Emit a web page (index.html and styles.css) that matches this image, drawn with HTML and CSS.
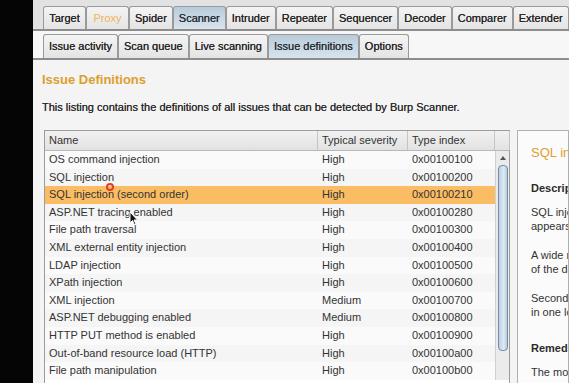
FILE: index.html
```html
<!DOCTYPE html>
<html>
<head>
<meta charset="UTF-8">
<title>Burp Scanner - Issue definitions</title>
<link rel="stylesheet" href="styles.css">
</head>
<body>
	<div class="edge"></div>
	<div class="app">
		<div class="tabs main-tabs">
			<span class="tab">Target</span>
			<span class="tab proxy">Proxy</span>
			<span class="tab">Spider</span>
			<span class="tab active">Scanner</span>
			<span class="tab">Intruder</span>
			<span class="tab">Repeater</span>
			<span class="tab">Sequencer</span>
			<span class="tab">Decoder</span>
			<span class="tab">Comparer</span>
			<span class="tab">Extender</span>
		</div>
		<div class="tabs sub-tabs">
			<span class="tab">Issue activity</span>
			<span class="tab">Scan queue</span>
			<span class="tab">Live scanning</span>
			<span class="tab active">Issue definitions</span>
			<span class="tab">Options</span>
		</div>
		<div class="content">
			<h1 class="title">Issue Definitions</h1>
			<p class="intro">This listing contains the definitions of all issues that can be detected by Burp Scanner.</p>
			<div class="split">
				<div class="list">
					<div class="head">
						<span>Name</span>
						<span>Typical severity</span>
						<span>Type index</span>
						<span></span>
					</div>
					<div class="body">
						<div class="rows">
							<div class="row"><span>OS command injection</span><span>High</span><span>0x00100100</span></div>
							<div class="row"><span>SQL injection</span><span>High</span><span>0x00100200</span></div>
							<div class="row selected"><span>SQL injection (second order)</span><span>High</span><span>0x00100210</span></div>
							<div class="row"><span>ASP.NET tracing enabled</span><span>High</span><span>0x00100280</span></div>
							<div class="row"><span>File path traversal</span><span>High</span><span>0x00100300</span></div>
							<div class="row"><span>XML external entity injection</span><span>High</span><span>0x00100400</span></div>
							<div class="row"><span>LDAP injection</span><span>High</span><span>0x00100500</span></div>
							<div class="row"><span>XPath injection</span><span>High</span><span>0x00100600</span></div>
							<div class="row"><span>XML injection</span><span>Medium</span><span>0x00100700</span></div>
							<div class="row"><span>ASP.NET debugging enabled</span><span>Medium</span><span>0x00100800</span></div>
							<div class="row"><span>HTTP PUT method is enabled</span><span>High</span><span>0x00100900</span></div>
							<div class="row"><span>Out-of-band resource load (HTTP)</span><span>High</span><span>0x00100a00</span></div>
							<div class="row"><span>File path manipulation</span><span>High</span><span>0x00100b00</span></div>
						</div>
						<div class="scrollbar">
							<div class="arrow"></div>
							<div class="thumb"></div>
						</div>
					</div>
					<span class="click"></span>
					<svg class="pointer" width="10" height="15" viewBox="0 0 10 15">
						<path d="M1 1 L1 12 L3.5 9.5 L5.5 14 L7 13.3 L5 9 L8.5 9 Z" fill="#111" stroke="#fff" stroke-width="1"/>
					</svg>
				</div>
				<div class="detail">
					<h2 class="detail-title">SQL injection (second order)</h2>
					<h3>Description</h3>
					<p>SQL injection vulnerabilities arise when user-controllable data<br>appears in database queries in an unsafe manner.</p>
					<p>A wide range of damaging attacks can often be delivered<br>of the database and the application itself.</p>
					<p>Second-order SQL injection arises when user data is stored<br>in one location and later used in a query.</p>
					<h3 class="remed">Remediation</h3>
					<p>The most effective way to prevent SQL injection attacks</p>
				</div>
			</div>
		</div>
	</div>
</body>
</html>
```

FILE: styles.css
```css
*{ box-sizing: border-box; }
body{
	margin: 0;
	height: 383px;
	overflow: hidden;
	display: flex;
	background: #050505;
	font: 11px/14px "Liberation Sans", Arial, sans-serif;
	color: #333;
}
.edge{
	width: 33px;
	flex: none;
	background: #050505;
}
.app{
	flex: 1;
	min-width: 0;
	background: #f4f4f4;
	overflow: hidden;
}

/* tab strips */
.tabs{
	display: flex;
	white-space: nowrap;
	padding-left: 10px;
	border-bottom: 2px solid #8d8d8d;
}
.main-tabs{
	padding-top: 6px;
	background: #e2e2e2;
}
.sub-tabs{
	padding-top: 3px;
	background: #f7f7f7;
}
.tab{
	flex: none;
	min-width: 43px;
	height: 23px;
	padding: 0 5px;
	line-height: 22px;
	text-align: center;
	border: 1px solid #9a9a9a;
	border-bottom: 0;
	border-radius: 3px 3px 0 0;
	background: linear-gradient(#f4f4f4, #e4e4e4);
	color: #262626;
	text-shadow: 0 0 .5px #333;
	font-size: 11px;
}
.sub-tabs .tab{
	height: 24px;
	line-height: 23px;
}
.tab.active{
	background: linear-gradient(#b9cbd9, #d8e4ee);
	color: #24303a;
}
.tab.proxy{ color: #efb55a; text-shadow: none; }

/* page body */
.content{
	padding: 12px 0 0 9px;
}
.title{
	margin: 0;
	font-size: 13px;
	line-height: 16px;
	color: #dba02e;
}
.intro{
	margin: 12px 0 16px;
	color: #2b2b2b;
	text-shadow: 0 0 .4px #444;
}
.split{
	display: flex;
	gap: 7px;
	margin-left: 2px;
}

/* issue list */
.list{
	position: relative;
	flex: none;
	width: 466px;
	border: 1px solid #9c9c9c;
	border-bottom: 0;
	background: #fff;
}
.head, .row{
	display: grid;
	grid-template-columns: 273px 90px 87px 15px;
}
.row{ grid-template-columns: 273px 90px 87px; }
.head{
	height: 20px;
	line-height: 19px;
	background: linear-gradient(#f1f1f1, #e2e2e2);
	border-bottom: 1px solid #b8b8b8;
	color: #333;
}
.head span{
	padding-left: 4px;
	border-right: 1px solid #c4c4c4;
}
.body{
	display: flex;
}
.rows{
	width: 450px;
}
.row{
	height: 17.6px;
	line-height: 17.6px;
	background: #fafafa;
}
.row:nth-child(even){ background: #f5f5f5; }
.row span{ padding-left: 4px; white-space: nowrap; }
.row.selected{ background: #fbbd64; }

.scrollbar{
	width: 15px;
	position: relative;
	background: #ebebeb;
	border-left: 1px solid #d0d0d0;
}
.arrow{
	width: 0; height: 0;
	margin: 5px auto 0;
	border: 3px solid transparent;
	border-bottom: 4px solid #555;
	border-top: 0;
}
.thumb{
	margin: 5px 1px 0 2px;
	height: 186px;
	border: 1px solid #6f8eaa;
	border-radius: 4px;
	background: linear-gradient(90deg, #bcd0e2, #dfeaf3 60%, #b6cadb);
}

/* screen recording marks */
.click{
	position: absolute;
	left: 61px; top: 52px;
	width: 8px; height: 8px;
	border: 2px solid #e04020;
	border-radius: 50%;
}
.pointer{
	position: absolute;
	left: 84px; top: 80px;
}

/* detail pane */
.detail{
	flex: 1;
	min-width: 0;
	white-space: nowrap;
	overflow: hidden;
	padding: 14px 0 0 13px;
	border: 1px solid #b0b0b0;
	border-bottom: 0;
	background: #fbfbfb;
	color: #333;
}
.detail-title{
	margin: 0;
	font-size: 13px;
	line-height: 16px;
	font-weight: normal;
	color: #dba02e;
}
.detail h3{
	margin: 20px 0 10px;
	font-size: 11px;
	line-height: 14px;
	color: #2b2b2b;
}
.detail p{
	margin: 0 0 15px;
}
.detail .remed{ margin-top: 22px; }
```
